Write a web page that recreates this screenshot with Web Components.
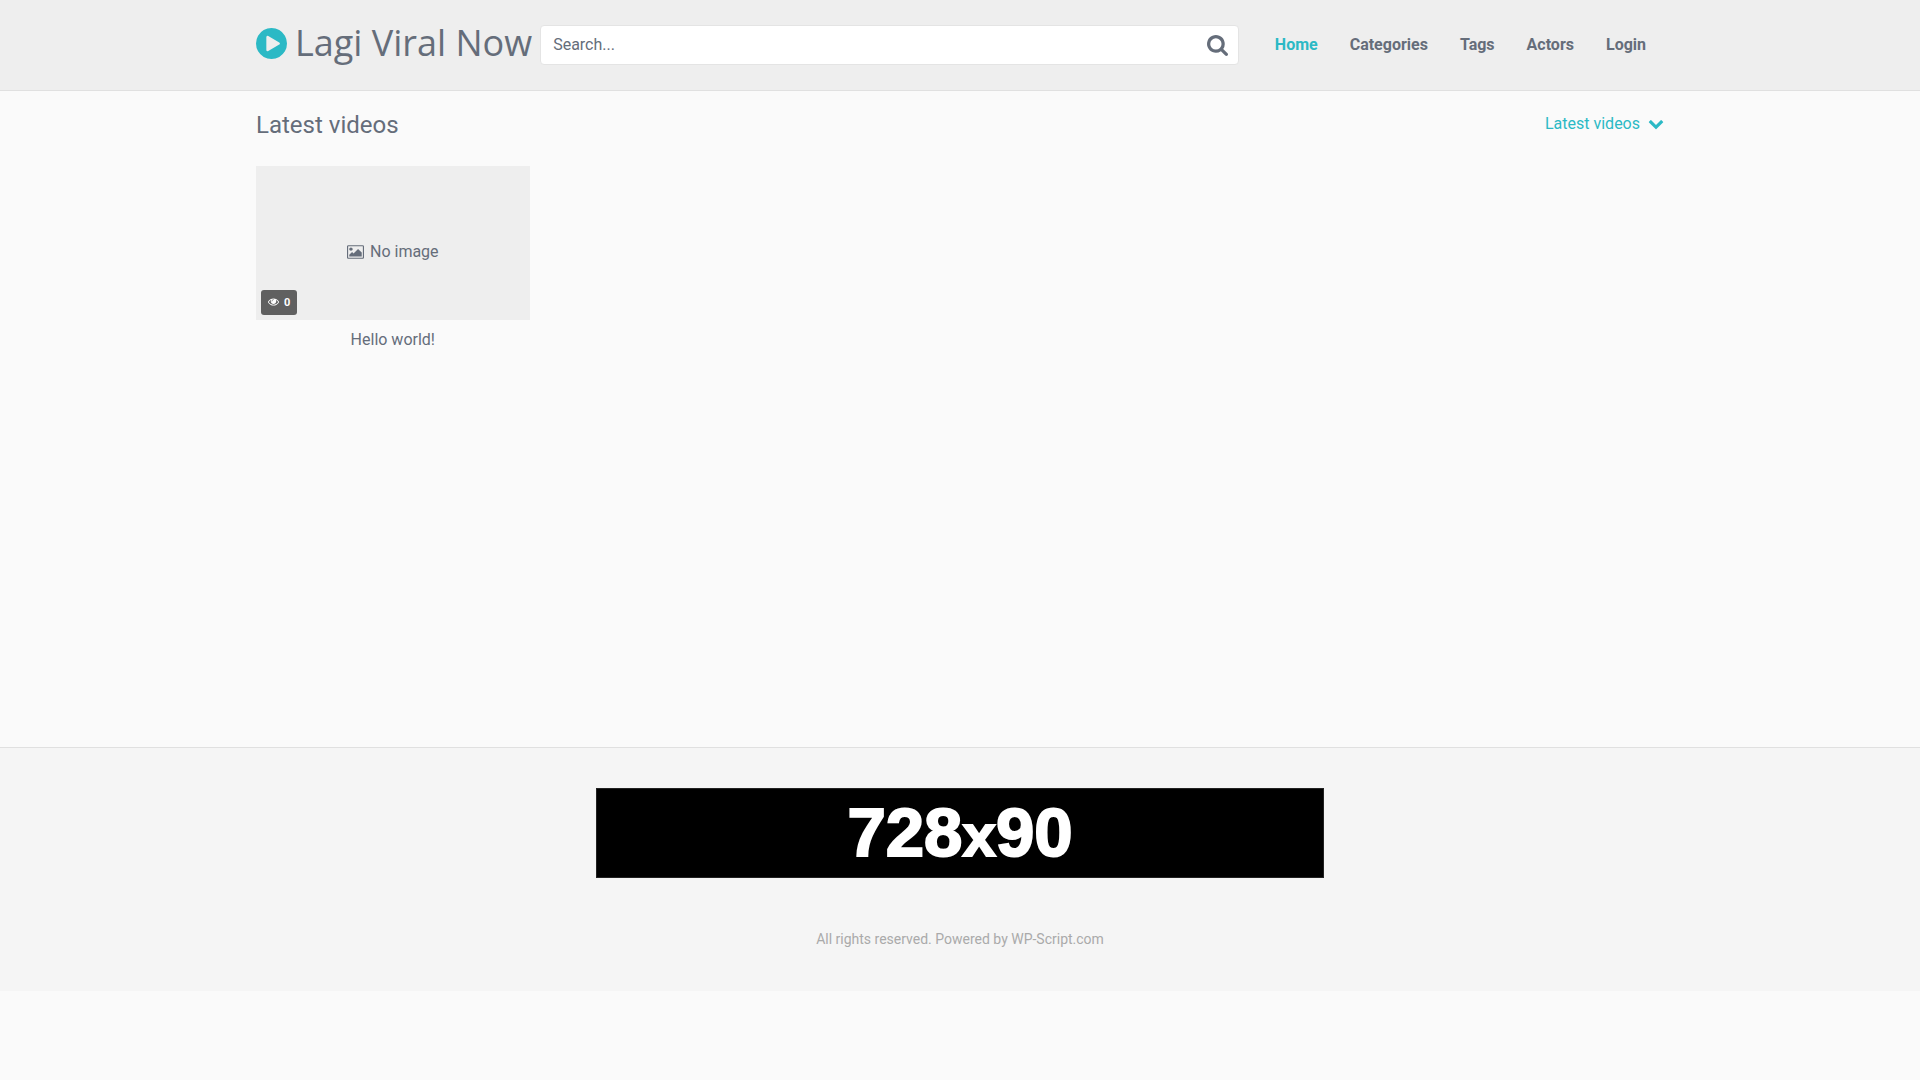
<!DOCTYPE html>
<html lang="en">
<head>
<meta charset="utf-8">
<meta name="viewport" content="width=device-width, initial-scale=1">
<title>Lagi Viral Now</title>
<style>
    body {
        margin: 0;
        background-color: #fafafa;
        color: #656d7a;
        font: 16px/24px Roboto, "Liberation Sans", sans-serif;
        --accent: #2bb9c5;
        --wrap: 1408px;
    }
</style>
</head>
<body>
<site-header>
    <site-logo>Lagi Viral Now</site-logo>
    <search-form></search-form>
    <site-nav>
        <nav-item href="#home" active>Home</nav-item>
        <nav-item href="#categories">Categories</nav-item>
        <nav-item href="#tags">Tags</nav-item>
        <nav-item href="#actors">Actors</nav-item>
        <nav-item href="#login">Login</nav-item>
    </site-nav>
</site-header>
<video-section>
    <span slot="title">Latest videos</span>
    <sort-filter slot="filter">Latest videos</sort-filter>
    <video-card views="0">Hello world!</video-card>
</video-section>
<site-footer>
    <ad-banner></ad-banner>
    <span slot="copyright">All rights reserved. Powered by WP-Script.com</span>
</site-footer>

<script>
function makeTemplate(html) {
    const $template = document.createElement('template');
    $template.innerHTML = html;
    return $template;
}

class BaseElement extends HTMLElement {
    constructor() {
        super();
        this.attachShadow({mode: 'open'});
        this.shadowRoot.appendChild(this.constructor.template.content.cloneNode(true));
    }
}

class SiteHeader extends BaseElement {
    static template = makeTemplate(/*html*/ `
        <style>
            :host {
                display: block;
                background-color: #eeeeee;
                border-bottom: 1px solid #e0e0e0;
            }

            header {
                display: flex;
                max-width: var(--wrap);
                margin: 0 auto;
                padding: 25px 0;
                gap: 8px;
            }
        </style>
        <header><slot></slot></header>
    `);
}

class SiteLogo extends BaseElement {
    static template = makeTemplate(/*html*/ `
        <style>
            :host {
                display: block;
            }

            a {
                display: flex;
                align-items: center;
                gap: 8px;
                font: 36px/36px "Open Sans", sans-serif;
                color: inherit;
                text-decoration: none;
                white-space: nowrap;
            }

            svg {
                width: 31px;
                height: 31px;
                fill: var(--accent);
            }
        </style>
        <a href="#home">
            <svg viewBox="0 0 1536 1536" aria-hidden="true">
                <path d="M768 0q209 0 385.500 103t279.500 279.500 103 385.500-103 385.500-279.500 279.500-385.500 103-385.500-103-279.500-279.500-103-385.500 103-385.500 279.500-279.500 385.500-103zM1152 823q32-18 32-55t-32-55l-544-320q-31-19-64-1-32 19-32 56v640q0 37 32 56 16 8 32 8 17 0 32-9z"/>
            </svg>
            <span><slot></slot></span>
        </a>
    `);
}

class SearchForm extends BaseElement {
    static template = makeTemplate(/*html*/ `
        <style>
            :host {
                display: block;
                flex: 1;
                min-width: 0;
            }

            form {
                display: flex;
                box-sizing: border-box;
                height: 40px;
                background-color: #ffffff;
                border: 1px solid #e4e4e4;
                border-radius: 4px;
            }

            input {
                flex: 1;
                min-width: 0;
                padding: 0 12px;
                border: 0;
                background: none;
                font: inherit;
                color: inherit;
                outline: none;
            }

            input::placeholder {
                color: inherit;
                opacity: 1;
            }

            button {
                display: flex;
                align-items: center;
                padding: 0 10px;
                border: 0;
                background: none;
                color: inherit;
            }

            svg {
                width: 21px;
                height: 21px;
                fill: currentColor;
            }
        </style>
        <form>
            <input type="text" aria-label="Search" placeholder="Search...">
            <button type="submit" aria-label="Search">
                <svg viewBox="0 0 1664 1664" aria-hidden="true">
                    <path d="M1152 704q0-185-131.500-316.500t-316.500-131.500-316.500 131.500-131.500 316.500 131.500 316.500 316.500 131.500 316.500-131.500 131.500-316.500zM1664 1536q0 52-38 90t-90 38q-54 0-90-38l-343-342q-179 124-399 124-143 0-273.500-55.500t-225-150-150-225-55.500-273.500 55.500-273.500 150-225 225-150 273.500-55.500 273.500 55.500 225 150 150 225 55.500 273.500q0 220-124 399l343 343q37 37 37 90z"/>
                </svg>
            </button>
        </form>
    `);
}

class SiteNav extends BaseElement {
    static template = makeTemplate(/*html*/ `
        <style>
            :host {
                display: block;
            }

            nav {
                display: flex;
                height: 40px;
                align-items: center;
                padding: 0 2px 0 12px;
            }
        </style>
        <nav><slot></slot></nav>
    `);
}

class NavItem extends BaseElement {
    static template = makeTemplate(/*html*/ `
        <style>
            :host {
                display: block;
            }

            :host([active]) {
                color: var(--accent);
            }

            a {
                padding: 0 16px;
                font-weight: bold;
                color: inherit;
                text-decoration: none;
            }
        </style>
        <a><slot></slot></a>
    `);

    connectedCallback() {
        this.shadowRoot.querySelector('a').setAttribute('href', this.getAttribute('href'));
    }
}

class VideoSection extends BaseElement {
    static template = makeTemplate(/*html*/ `
        <style>
            :host {
                display: block;
                box-sizing: border-box;
                max-width: var(--wrap);
                min-height: 656px;
                margin: 0 auto;
                padding-top: 16px;
            }

            header {
                display: flex;
                justify-content: space-between;
                margin-bottom: 23px;
            }

            h1 {
                margin: 0;
                font-size: 24px;
                line-height: 36px;
                font-weight: normal;
            }

            .videos {
                display: grid;
                grid-template-columns: repeat(5, 1fr);
                gap: 10px;
            }
        </style>
        <header>
            <h1><slot name="title"></slot></h1>
            <slot name="filter"></slot>
        </header>
        <div class="videos"><slot></slot></div>
    `);
}

class SortFilter extends BaseElement {
    static template = makeTemplate(/*html*/ `
        <style>
            :host {
                display: block;
            }

            button {
                display: flex;
                align-items: center;
                gap: 8px;
                padding: 5px 0;
                border: 0;
                background: none;
                font: inherit;
                color: var(--accent);
            }

            svg {
                width: 16px;
                height: 16px;
                fill: currentColor;
            }
        </style>
        <button type="button" aria-haspopup="true">
            <slot></slot>
            <svg viewBox="0 80 1792 1792" aria-hidden="true">
                <path d="M1683 808l-742 741q-19 19-45 19t-45-19l-742-741q-19-19-19-45.500t19-45.500l166-165q19-19 45-19t45 19l531 531 531-531q19-19 45-19t45 19l166 165q19 19 19 45.500t-19 45.500z"/>
            </svg>
        </button>
    `);
}

class VideoCard extends BaseElement {
    static template = makeTemplate(/*html*/ `
        <style>
            :host {
                display: block;
            }

            a {
                display: block;
                color: inherit;
                text-decoration: none;
                text-align: center;
            }

            .thumb {
                position: relative;
                display: flex;
                align-items: center;
                justify-content: center;
                gap: 6px;
                aspect-ratio: 16 / 9;
                box-sizing: border-box;
                padding-top: 18px;
                background-color: #eeeeee;
            }

            .thumb > svg {
                width: 17px;
                height: 14px;
                fill: currentColor;
            }

            .views {
                position: absolute;
                left: 5px;
                bottom: 5px;
                display: flex;
                align-items: center;
                gap: 5px;
                padding: 0 7px;
                border-radius: 3px;
                background-color: #606060;
                color: #ffffff;
                font-size: 11px;
                line-height: 25px;
                font-weight: bold;
            }

            .views svg {
                width: 11px;
                height: 8px;
                fill: currentColor;
            }

            .title {
                padding-top: 8px;
            }
        </style>
        <a href="#video">
            <div class="thumb">
                <svg viewBox="0 0 1920 1536" aria-hidden="true">
                    <path d="M640 448q0 80-56 136t-136 56-136-56-56-136 56-136 136-56 136 56 56 136zM1664 832v448h-1408v-192l320-320 160 160 512-512zM1760 128h-1600q-13 0-22.500 9.500t-9.500 22.500v1216q0 13 9.500 22.500t22.500 9.500h1600q13 0 22.500-9.500t9.500-22.500v-1216q0-13-9.500-22.500t-22.500-9.500zM1920 160v1216q0 66-47 113t-113 47h-1600q-66 0-113-47t-47-113v-1216q0-66 47-113t113-47h1600q66 0 113 47t47 113z"/>
                </svg>
                <span>No image</span>
                <div class="views">
                    <svg viewBox="0 0 1792 1152" aria-hidden="true">
                        <path d="M1664 576q-152-236-381-353 61 104 61 225 0 185-131.500 316.500t-316.500 131.500-316.500-131.500-131.500-316.500q0-121 61-225-229 117-381 353 133 205 333.500 326.500t434.500 121.500 434.500-121.500 333.500-326.500zM944 192q0-20-14-34t-34-14q-125 0-214.500 89.500t-89.500 214.500q0 20 14 34t34 14 34-14 14-34q0-86 61-147t147-61q20 0 34-14t14-34zM1792 576q0 34-20 69-140 230-376.500 368.500t-499.500 138.500-499.500-139-376.500-368q-20-35-20-69t20-69q140-229 376.500-368t499.500-139 499.500 139 376.500 368q20 35 20 69z"/>
                    </svg>
                    <span class="count"></span>
                </div>
            </div>
            <div class="title"><slot></slot></div>
        </a>
    `);

    connectedCallback() {
        this.shadowRoot.querySelector('.count').textContent = this.getAttribute('views');
    }
}

class SiteFooter extends BaseElement {
    static template = makeTemplate(/*html*/ `
        <style>
            :host {
                display: block;
                background-color: #f5f5f5;
                border-top: 1px solid #e0e0e0;
            }

            footer {
                display: flex;
                flex-direction: column;
                align-items: center;
                gap: 49px;
                padding: 40px 0;
            }

            .copyright {
                color: #aaaaaa;
                font-size: 14px;
                line-height: 24px;
            }
        </style>
        <footer>
            <slot></slot>
            <div class="copyright"><slot name="copyright"></slot></div>
        </footer>
    `);
}

class AdBanner extends BaseElement {
    static template = makeTemplate(/*html*/ `
        <style>
            :host {
                display: block;
                width: 100%;
                max-width: 728px;
            }

            a {
                display: block;
                border: 1px solid #222222;
                background-color: #000000;
                color: #ffffff;
                font: bold 69px/88px "Liberation Sans", Arial, sans-serif;
                -webkit-text-stroke: 2px #ffffff;
                text-align: center;
                text-decoration: none;
            }

            small {
                font-size: 60px;
                line-height: 1;
            }
        </style>
        <a href="#ad">728<small>x</small>90</a>
    `);
}

window.customElements.define('site-header', SiteHeader);
window.customElements.define('site-logo', SiteLogo);
window.customElements.define('search-form', SearchForm);
window.customElements.define('site-nav', SiteNav);
window.customElements.define('nav-item', NavItem);
window.customElements.define('video-section', VideoSection);
window.customElements.define('sort-filter', SortFilter);
window.customElements.define('video-card', VideoCard);
window.customElements.define('site-footer', SiteFooter);
window.customElements.define('ad-banner', AdBanner);
</script>
</body>
</html>
